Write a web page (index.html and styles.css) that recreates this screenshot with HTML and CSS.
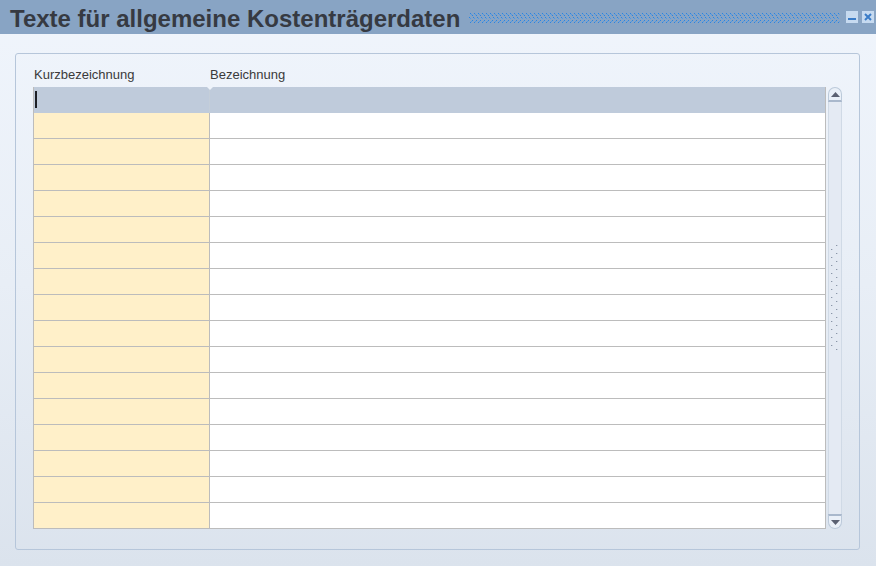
FILE: index.html
```html
<!DOCTYPE html>
<html lang="de">
<head>
    <meta charset="UTF-8">
    <title>Texte für allgemeine Kostenträgerdaten</title>
    <link rel="stylesheet" href="styles.css">
</head>
<body>
    <div class="window">
        <div class="titlebar">
            <h1 class="title">Texte für allgemeine Kostenträgerdaten</h1>
            <svg class="grip" height="12">
                <defs>
                    <pattern id="dots" width="8" height="12" patternUnits="userSpaceOnUse">
                        <rect x="1" y="1" width="1" height="1" fill="#2a84e2"/>
                        <rect x="5" y="1" width="1" height="1" fill="#2a84e2"/>
                        <rect x="2" y="2" width="1" height="1" fill="#4c9ae8"/>
                        <rect x="6" y="2" width="1" height="1" fill="#4c9ae8"/>
                        <rect x="3" y="3" width="1" height="1" fill="#2a84e2"/>
                        <rect x="7" y="3" width="1" height="1" fill="#2a84e2"/>
                        <rect x="0" y="5" width="1" height="1" fill="#2a84e2"/>
                        <rect x="4" y="5" width="1" height="1" fill="#2a84e2"/>
                        <rect x="1" y="6" width="1" height="1" fill="#4c9ae8"/>
                        <rect x="5" y="6" width="1" height="1" fill="#4c9ae8"/>
                        <rect x="3" y="8" width="1" height="1" fill="#2a84e2"/>
                        <rect x="7" y="8" width="1" height="1" fill="#2a84e2"/>
                        <rect x="2" y="9" width="1" height="1" fill="#4c9ae8"/>
                        <rect x="6" y="9" width="1" height="1" fill="#4c9ae8"/>
                        <rect x="1" y="10" width="1" height="1" fill="#2a84e2"/>
                        <rect x="5" y="10" width="1" height="1" fill="#2a84e2"/>
                    </pattern>
                </defs>
                <rect width="100%" height="12" fill="url(#dots)"/>
            </svg>
            <div class="win-buttons">
                <span class="win-btn">
                    <svg width="12" height="12"><rect x="2" y="7" width="8" height="2" fill="#3a7cc8"/></svg>
                </span>
                <span class="win-btn">
                    <svg width="12" height="12"><path d="M3 3 L9 9 M9 3 L3 9" stroke="#3a7cc8" stroke-width="2"/></svg>
                </span>
            </div>
        </div>

        <div class="content">
            <div class="panel">
                <div class="labels">
                    <span class="label label-short">Kurzbezeichnung</span>
                    <span class="label">Bezeichnung</span>
                </div>
                <div class="table-area">
                    <div class="grid">
                        <div class="row row-active">
                            <div class="cell cell-short"><span class="caret"></span></div>
                            <div class="cell cell-long"></div>
                            <span class="notch"></span>
                        </div>
                        <div class="row"><div class="cell cell-short"></div><div class="cell cell-long"></div></div>
                        <div class="row"><div class="cell cell-short"></div><div class="cell cell-long"></div></div>
                        <div class="row"><div class="cell cell-short"></div><div class="cell cell-long"></div></div>
                        <div class="row"><div class="cell cell-short"></div><div class="cell cell-long"></div></div>
                        <div class="row"><div class="cell cell-short"></div><div class="cell cell-long"></div></div>
                        <div class="row"><div class="cell cell-short"></div><div class="cell cell-long"></div></div>
                        <div class="row"><div class="cell cell-short"></div><div class="cell cell-long"></div></div>
                        <div class="row"><div class="cell cell-short"></div><div class="cell cell-long"></div></div>
                        <div class="row"><div class="cell cell-short"></div><div class="cell cell-long"></div></div>
                        <div class="row"><div class="cell cell-short"></div><div class="cell cell-long"></div></div>
                        <div class="row"><div class="cell cell-short"></div><div class="cell cell-long"></div></div>
                        <div class="row"><div class="cell cell-short"></div><div class="cell cell-long"></div></div>
                        <div class="row"><div class="cell cell-short"></div><div class="cell cell-long"></div></div>
                        <div class="row"><div class="cell cell-short"></div><div class="cell cell-long"></div></div>
                        <div class="row"><div class="cell cell-short"></div><div class="cell cell-long"></div></div>
                        <div class="row"><div class="cell cell-short"></div><div class="cell cell-long"></div></div>
                    </div>

                    <div class="scrollbar">
                        <div class="scroll-btn scroll-up">
                            <svg width="9" height="5"><path d="M0 5 L4.5 0 L9 5 Z" fill="#5b6172"/></svg>
                        </div>
                        <div class="scroll-track">
                            <svg class="scroll-grip" width="12" height="108">
                                <defs>
                                    <pattern id="gripdots" width="12" height="8" patternUnits="userSpaceOnUse">
                                        <rect x="7" y="0" width="1" height="1" fill="#8a96a8"/>
                                        <rect x="8" y="0" width="1" height="1" fill="#c8d0dc"/>
                                        <rect x="2" y="4" width="1" height="1" fill="#8a96a8"/>
                                        <rect x="3" y="4" width="1" height="1" fill="#c8d0dc"/>
                                    </pattern>
                                </defs>
                                <rect width="12" height="108" fill="url(#gripdots)"/>
                            </svg>
                        </div>
                        <div class="scroll-btn scroll-down">
                            <svg width="9" height="5"><path d="M0 0 L9 0 L4.5 5 Z" fill="#5b6172"/></svg>
                        </div>
                    </div>
                </div>
            </div>
        </div>
    </div>
</body>
</html>
```

FILE: styles.css
```css
html, body {
    margin: 0;
    padding: 0;
}

body {
    width: 876px;
    height: 566px;
    overflow: hidden;
    font-family: "Liberation Sans", Arial, sans-serif;
}

.window {
    height: 566px;
    display: flex;
    flex-direction: column;
    background: linear-gradient(to bottom, #f0f5fc 0%, #e8eef6 50%, #dbe3ed 100%);
}

.titlebar {
    height: 34px;
    flex: 0 0 34px;
    background-color: #88a4c4;
    display: flex;
    align-items: center;
    padding: 0 2px 0 10px;
    box-sizing: border-box;
}

.title {
    margin: 0;
    font-size: 24px;
    font-weight: bold;
    color: #363a42;
    white-space: nowrap;
    line-height: 34px;
    padding-top: 3px;
}

.grip {
    flex: 1;
    margin-left: 9px;
    margin-top: 2px;
    display: block;
}

.win-buttons {
    display: flex;
    gap: 4px;
    margin-left: 6px;
    margin-top: 0;
}

.win-btn {
    width: 12px;
    height: 12px;
    background-color: #c6daf0;
    display: block;
}

.win-btn svg {
    display: block;
}

.content {
    flex: 1;
    padding: 19px 16px 16px 15px;
    display: flex;
}

.panel {
    flex: 1;
    border: 1px solid #b6c6da;
    border-radius: 3px;
    padding: 0 17px 19px 17px;
    display: flex;
    flex-direction: column;
}

.labels {
    height: 33px;
    display: flex;
    align-items: flex-end;
    padding-bottom: 5px;
    box-sizing: border-box;
    font-size: 13px;
    color: #3a3a3a;
}

.label-short {
    width: 176px;
    padding-left: 1px;
}

.table-area {
    display: flex;
    gap: 2px;
}

.grid {
    width: 793px;
    border-left: 1px solid #bcbcbc;
    border-right: 1px solid #bcbcbc;
    box-sizing: border-box;
}

.row {
    display: flex;
    height: 26px;
    border-bottom: 1px solid #bcbcbc;
    box-sizing: border-box;
    position: relative;
}

.row-active {
    background-color: #bfcbdb;
    border-bottom: none;
}

.cell-short {
    width: 175px;
    border-right: 1px solid #bcbcbc;
    background-color: #fff0c9;
}

.cell-long {
    flex: 1;
    background-color: #ffffff;
}

.row-active .cell-short,
.row-active .cell-long {
    background-color: #bfcbdb;
}

.row-active .cell-short {
    border-right: 1px solid #c4ced9;
}

.caret {
    display: block;
    width: 2px;
    height: 17px;
    margin: 4px 0 0 1px;
    background-color: #1c1f26;
}

.notch {
    position: absolute;
    left: 173px;
    top: 0;
    width: 0;
    height: 0;
    border-left: 3px solid transparent;
    border-right: 3px solid transparent;
    border-top: 3px solid #eef3fa;
}

.scrollbar {
    width: 14px;
    height: 442px;
    display: flex;
    flex-direction: column;
    box-sizing: border-box;
}

.scroll-btn {
    height: 15px;
    background-color: #eaf0f8;
    border: 1px solid #bccada;
    display: flex;
    align-items: center;
    justify-content: center;
    box-sizing: border-box;
}

.scroll-btn svg {
    display: block;
}

.scroll-up {
    border-radius: 7px 7px 0 0;
    border-bottom: 2px solid #a9b8cc;
}

.scroll-down {
    border-radius: 0 0 7px 7px;
    border-top: 2px solid #a9b8cc;
}

.scroll-track {
    flex: 1;
    background-color: #e4eaf3;
    border-left: 1px solid #d0dae6;
    border-right: 1px solid #d0dae6;
    display: flex;
    align-items: center;
    justify-content: center;
}

.scroll-grip {
    display: block;
    margin-top: -18px;
}
```
